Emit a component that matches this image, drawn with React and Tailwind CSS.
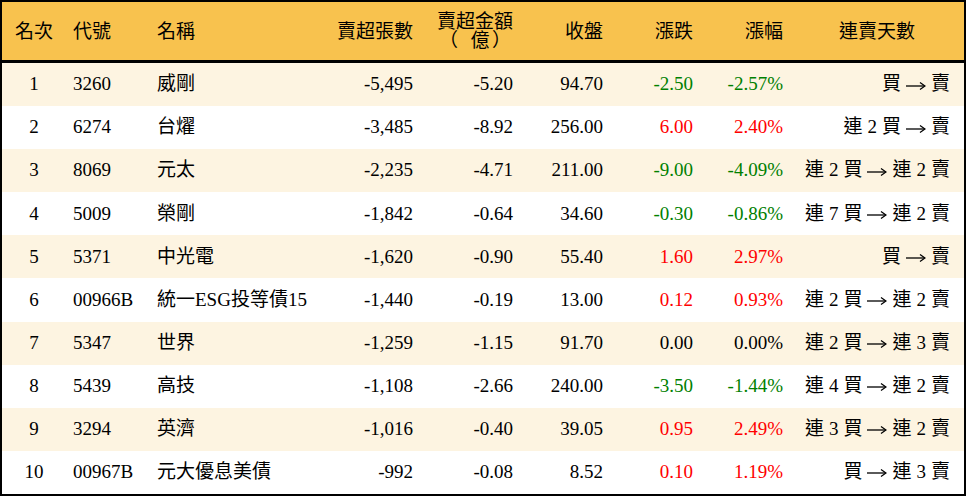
const rows = [
  ["1", "3260", "威剛", "-5,495", "-5.20", "94.70", "-2.50", "-2.57%", [], []],
  ["2", "6274", "台燿", "-3,485", "-8.92", "256.00", "6.00", "2.40%", ["連", "2"], []],
  ["3", "8069", "元太", "-2,235", "-4.71", "211.00", "-9.00", "-4.09%", ["連", "2"], ["連", "2"]],
  ["4", "5009", "榮剛", "-1,842", "-0.64", "34.60", "-0.30", "-0.86%", ["連", "7"], ["連", "2"]],
  ["5", "5371", "中光電", "-1,620", "-0.90", "55.40", "1.60", "2.97%", [], []],
  ["6", "00966B", "統一ESG投等債15", "-1,440", "-0.19", "13.00", "0.12", "0.93%", ["連", "2"], ["連", "2"]],
  ["7", "5347", "世界", "-1,259", "-1.15", "91.70", "0.00", "0.00%", ["連", "2"], ["連", "3"]],
  ["8", "5439", "高技", "-1,108", "-2.66", "240.00", "-3.50", "-1.44%", ["連", "4"], ["連", "2"]],
  ["9", "3294", "英濟", "-1,016", "-0.40", "39.05", "0.95", "2.49%", ["連", "3"], ["連", "2"]],
  ["10", "00967B", "元大優息美債", "-992", "-0.08", "8.52", "0.10", "1.19%", [], ["連", "3"]],
];

const grid = "grid grid-cols-[64px_84px_180px_90px_100px_90px_90px_90px_174px] items-center";

function changeColor(v) {
  if (v.startsWith("-")) return "text-[#008000]";
  if (parseFloat(v) === 0) return "text-black";
  return "text-[#ff0000]";
}

function Arrow() {
  return (
    <svg width="20" height="10" viewBox="0 0 20 10" className="mt-[2px]">
      <path d="M0 5 H18.5" stroke="#000" strokeWidth="1.3" />
      <path d="M14 1.5 L19 5 L14 8.5" fill="none" stroke="#000" strokeWidth="1.3" />
    </svg>
  );
}

export default function App() {
  return (
    <div className="w-[966px] h-[496px] bg-white font-['Liberation_Serif','Noto_Sans_CJK_TC',serif] text-[19px] text-black">
      <div className="border-2 border-black h-full flex flex-col">
        {/* header */}
        <div className={`${grid} h-[61px] bg-[#f8c24e] border-b-[3px] border-black leading-[19px]`}>
          <div className="text-center">名次</div>
          <div className="pl-[7px]">代號</div>
          <div className="pl-[7px]">名稱</div>
          <div className="text-right pr-[7px]">賣超張數</div>
          <div className="flex justify-end pr-[7px]">
            <div className="flex flex-col">
              <span>賣超金額</span>
              <span className="flex justify-between px-[2px]">
                <span>（</span>
                <span className="pl-[10px]">億</span>
                <span>）</span>
              </span>
            </div>
          </div>
          <div className="text-right pr-[7px]">收盤</div>
          <div className="text-right pr-[7px]">漲跌</div>
          <div className="text-right pr-[7px]">漲幅</div>
          <div className="text-center">連賣天數</div>
        </div>

        {/* rows */}
        {rows.map((r, i) => (
          <div key={r[0]} className={`${grid} flex-1 ${i % 2 === 0 ? "bg-[#fdf4e1]" : "bg-white"}`}>
            <div className="text-center">{r[0]}</div>
            <div className="pl-[7px]">{r[1]}</div>
            <div className="pl-[7px] whitespace-nowrap">{r[2]}</div>
            <div className="text-right pr-[7px]">{r[3]}</div>
            <div className="text-right pr-[7px]">{r[4]}</div>
            <div className="text-right pr-[7px]">{r[5]}</div>
            <div className={`text-right pr-[7px] ${changeColor(r[6])}`}>{r[6]}</div>
            <div className={`text-right pr-[7px] ${changeColor(r[7])}`}>{r[7]}</div>
            <div className="flex justify-end items-center gap-[5px] pr-[14px] whitespace-nowrap">
              {r[8].map((t, k) => <span key={"a" + k}>{t}</span>)}
              <span>買</span>
              <Arrow />
              {r[9].map((t, k) => <span key={"b" + k}>{t}</span>)}
              <span>賣</span>
            </div>
          </div>
        ))}
      </div>
    </div>
  );
}
